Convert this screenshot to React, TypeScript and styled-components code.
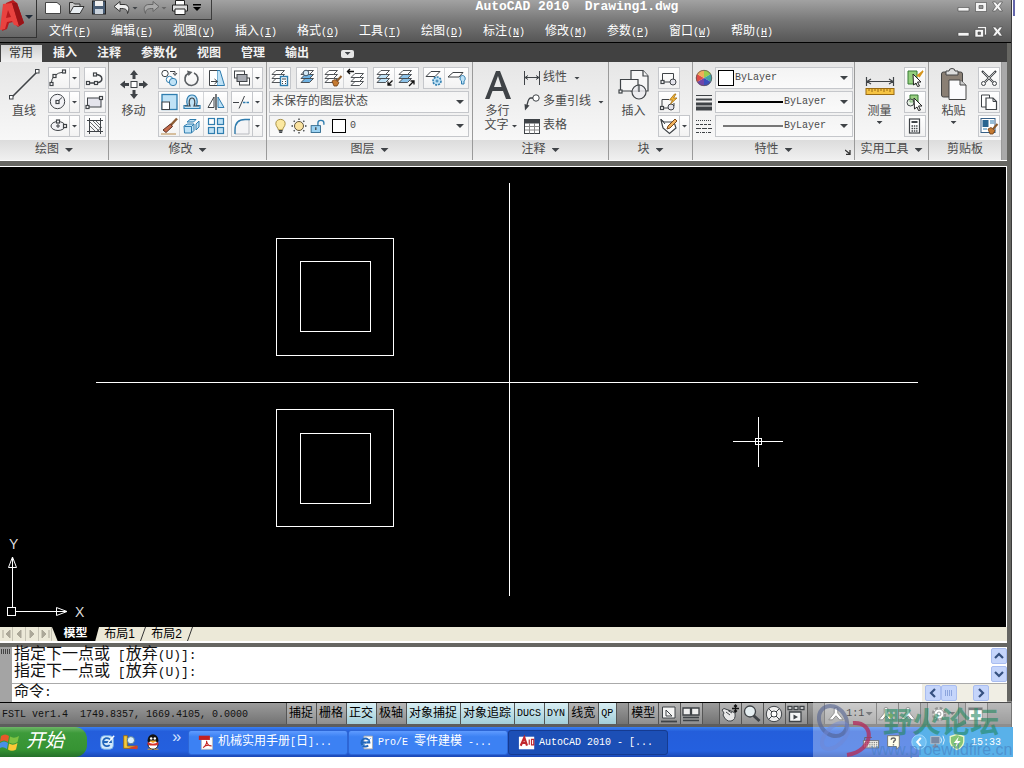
import React from "react";
import styled, { createGlobalStyle, css } from "styled-components";

const CJK = `"Liberation Mono", "Noto Sans CJK SC", monospace`;
const INK = "#3f4347";
const BLUE = "#2f7daf";
const PALE = "#bfe2f6";

const Global = createGlobalStyle`
  *, *::before, *::after { box-sizing: border-box; }
  body { margin: 0; background: #fff; font: 12px/16px ${CJK}; color: #111; }
  button, input, select, textarea { font: inherit; color: inherit; margin: 0; padding: 0; border: 0; background: none; border-radius: 0; outline: 0; }
  button { cursor: default; white-space: nowrap; }
  svg { display: block; flex: none; }
`;

/* ---------- text ---------- */
const Latin = styled.span<{ $size: number }>`
  font-size: ${(p) => p.$size}px;
  white-space: pre;
`;

function Mixed({ text, size = 10 }: { text: string; size?: number }) {
  return (
    <>
      {text.split(/([\x20-\x7e]+)/).map((part, i) =>
        i % 2 ? (
          <Latin key={i} $size={size}>{part}</Latin>
        ) : (
          part
        )
      )}
    </>
  );
}

/* ---------- icons ---------- */
const Node = ({ x, y }: { x: number; y: number }) => (
  <rect x={x - 1.5} y={y - 1.5} width="3" height="3" fill="#fff" stroke={INK} strokeWidth="1.2" />
);

const Stack = ({ tint = "#fff", dx = 0 }: { tint?: string; dx?: number }) => (
  <g transform={`translate(${dx} 0)`} stroke={INK} strokeWidth=".9" strokeLinejoin="round">
    <path d="M2 14.5 6 10.5H14.5L10.5 14.5Z" fill={tint} />
    <path d="M2 10.5 6 6.5H14.5L10.5 10.5Z" fill={tint} />
    <path d="M2 6.5 6 2.5H14.5L10.5 6.5Z" fill="#fff" />
  </g>
);

const Brush = () => (
  <g>
    <path d="M18.5 8 14 13" stroke="#8a5a2c" strokeWidth="2" />
    <path d="M9 13 12 11.5 16 14.500 14 18 11 18Z" fill="#c57a31" stroke="#6d3c12" strokeWidth=".8" />
  </g>
);

const art: Record<string, React.ReactNode> = {
  arc: <><path d="M2 16Q3 5 15 4" /><Node x={2.5} y={16} /><Node x={5.5} y={8} /><Node x={15} y={3.5} /></>,
  pline: <><path d="M3 15H11C19 15 19 6.5 10 6.5" strokeWidth="1.5" /><Node x={3} y={15} /><Node x={11} y={15} /><Node x={10} y={6.5} /></>,
  circle: <><circle cx="8.5" cy="9.5" r="7.2" fill="#f3f3f6" /><path d="M8.5 9.5 13 5.5" /><Node x={8.5} y={10} /></>,
  rect: <><rect x="2.5" y="6" width="13.5" height="9" fill="#e4e4ec" /><Node x={2.5} y={15} /><Node x={16} y={6} /></>,
  ellipse: <><ellipse cx="9" cy="10" rx="7" ry="4.5" fill="#f3f3f6" /><path d="M7 10h4M9 8v4" /><Node x={9} y={5.5} /><Node x={16} y={10} /></>,
  hatch: <><path d="M2 4.5H18M2 15.5H18M4.500 2V18M15.500 2V18" /><path d="M5 6 14 15M5 10 10 15M8 5 15 12M11 5 15 9M11 16l6-5" strokeWidth=".8" /></>,
  copy: <><circle cx="6" cy="5.500" r="3.200" fill="#fff" /><path d="M11 3.500h5v3M14 5l2 2.500 2-2.500" /><circle cx="10.500" cy="11.500" r="3.200" stroke={BLUE} fill="#fff" /><circle cx="14" cy="14" r="3.700" stroke={BLUE} fill={PALE} /></>,
  rotate: <><path d="M6.500 5.200A6.500 6.500 0 1 0 12 5" strokeWidth="1.700" stroke="#5b5f63" /><path d="M5 2.500 10.500 4 6.500 8Z" fill="#5b5f63" stroke="none" /></>,
  stretch: <><path d="M11 2.500h3L18.500 17.500H11Z" fill={PALE} stroke={BLUE} /><path d="M11 2.500H3.500v15H11" fill="#fff" /><path d="M5 13.500h6M8.500 11l3 2.500-3 2.500" /></>,
  scale: <><rect x="3" y="2.500" width="15" height="15" fill={PALE} stroke={BLUE} strokeWidth="1.300" /><rect x="3" y="10" width="7.500" height="7.500" fill="#fff" /></>,
  offset: <><path d="M2 16.500H18V13.500H14.500C16 10 15.500 3 10 3S4 10 5.500 13.500H2Z" fill={PALE} stroke={BLUE} strokeWidth="1.200" /><path d="M3 14H8C6.500 11 7 6 10 6s3.500 5 2 8h5" strokeWidth="1.200" /></>,
  mirror: <><path d="M8 5V15.500H2Z" fill="#fff" /><path d="M12 5V15.500H18Z" fill={PALE} stroke={BLUE} /><path d="M10 2V18" strokeWidth="1.400" /></>,
  erase: <><path d="M18 2.500 11 10" stroke="#8d5d36" strokeWidth="2.500" /><path d="M11.500 8 13.500 10.500 7 16.500 4 14Z" fill="#c46a4a" stroke="#5b3023" /><path d="M2 18H17" stroke="#b98948" /></>,
  explode: <><path d="M2 10 5.500 8H12V14.500L9.500 17H2.500Z" fill={PALE} stroke={BLUE} /><path d="M2.500 10.500H9.500V17M9.500 10.500 12 8M5 6 8 3.500h6L11.500 6ZM14 8l3-3v6l-3 3Z" stroke={BLUE} fill={PALE} /></>,
  array: <>{[2.5, 11.5].map((x) => [2.5, 11.5].map((y) => <rect key={`${x}-${y}`} x={x} y={y} width="6" height="6" fill={x === 2.5 && y === 2.5 ? "#fff" : PALE} stroke={BLUE} strokeWidth="1.200" />))}</>,
  order: <><rect x="2.500" y="3" width="10" height="7" fill="#fff" /><rect x="7.500" y="10" width="10" height="7" fill="#fff" /><rect x="5" y="6.500" width="10" height="7" fill="#a8abb2" /></>,
  trim: <><path d="M1 10.500H7M7 16.500 12.500 4" stroke={INK} /><path d="M11 10.500H18" stroke={BLUE} strokeWidth="1.500" strokeDasharray="2.500 1" /></>,
  fillet: <><path d="M3 18V14C3 7 7 3.500 13 3.500H17V18Z" fill="#f4f4f6" stroke="#b9bbc0" /><path d="M3 18V14C3 7 7 3.500 13 3.500H18" stroke={BLUE} strokeWidth="1.300" /></>,
  layerProps: <><Stack /><rect x="10.500" y="8.500" width="7" height="9" fill="#fff" stroke={BLUE} strokeWidth="1.400" /><path d="M12 11h4M12 13.500h1M15 13.500h1M12 15.500h1M15 15.500h1" /></>,
  layerCurrent: <><Stack tint="#6fb2e2" dx={2} /><circle cx="9" cy="5" r="2.800" fill="#d5e8f4" stroke="#456" /></>,
  layerMatch: <><Stack /><Brush /></>,
  layerPrev: <><g transform="translate(3 3)"><Stack /></g><path d="M1.500 3.500H8M4 1 1.500 3.500 4 6" strokeWidth="1.400" stroke="#111" /></>,
  layerIso: <><Stack tint={PALE} dx={1} /><path d="M18.500 12.500 14 17M14 13.500V17h3.500" stroke="#111" strokeWidth="1.300" /></>,
  layerUniso: <><Stack tint="#8cc2e8" dx={1} /><path d="M13 18 18 13M14.500 13H18v3.500" stroke="#111" strokeWidth="1.300" /></>,
  layerFreeze: <><path d="M2 8.500 7 3.500H16L11 8.500Z" fill="#fff" /><circle cx="13" cy="13" r="4" fill={PALE} stroke={BLUE} strokeDasharray="2 1" strokeWidth="1.600" /><circle cx="13" cy="13" r="1" stroke={BLUE} /></>,
  layerOff: <><path d="M1 9 6 4.500H16L12 9Z" fill="#fff" /><path d="M14.500 16v-3c-2-1-2-5.500 1-5.500s3.500 4.500 1.500 5.500v3Z" fill={PALE} stroke={BLUE} /></>,
  bulb: <><path d="M7.500 14C7 11 4.500 10 4.500 6.500 4.500 0 15.500 0 15.500 6.500 15.500 10 13 11 12.500 14Z" fill="#fbe8a0" stroke="#98802e" /><path d="M8 15h4.500M8.500 17h3.500" strokeWidth="1.500" /></>,
  sun: <><circle cx="10" cy="10" r="4.500" fill="#fbe3a0" stroke="#5e533b" /><path d="M10 2.500V4M10 16v1.500M2.500 10H4M16 10h1.500M4.700 4.700l1 1M14.300 14.300 15.300 15.300M15.300 4.700l-1 1M4.700 15.300l1-1" strokeWidth="1.400" /></>,
  unlock: <><path d="M10.500 9V5.500C10.500 2 17.500 2 17.500 5.500V8" stroke={BLUE} strokeWidth="1.600" /><rect x="2.500" y="9" width="11" height="8" fill="#9bd2f2" stroke="#245f86" /><path d="M8 11v3" strokeWidth="1.500" /></>,
  dimLinear: <><path d="M2.500 3V17M17.500 3V17M3 9.500H17M6 7.500 3 9.500 6 11.500M14 7.500 17 9.500 14 11.500" /></>,
  leader: <><circle cx="14" cy="6" r="3.200" fill="#fff" /><path d="M11 6H8.500Q6.500 6 5 13" strokeWidth="1.300" /><path d="M2.500 12 7.500 13.500 3 18.500Z" fill={INK} stroke="none" /></>,
  table: <><rect x="2.500" y="3.500" width="15" height="14" fill="#fff" /><path d="M2.500 5.500H17.500" strokeWidth="4" /><path d="M3 10.500H17.500M3 14H17.500M7.500 7V17.500M12.500 7V17.500" stroke="#888" /></>,
  blockCreate: <><path d="M3.500 14V5.500H14.500V12M3.500 14H11" /><circle cx="14" cy="14" r="3" fill="#e4e4ec" /><Node x={3.5} y={14} /></>,
  blockEdit: <><path d="M3 16V7.500H10M3 16H9M15 11v3" /><circle cx="12" cy="15" r="3" fill="#e4e4ec" /><path d="M15.500 2 10.500 8H13.500L11.500 12 18 6H14.500L17 2Z" fill="#f6b735" stroke="#a16d14" strokeWidth=".8" /><Node x={3} y={16} /></>,
  attrib: <><path d="M2 4 4 12 10.500 17.500 17 12 15 6H5Z" fill="#fff" strokeWidth="1.200" /><path d="M16 3 9 10 8 13 11 12 18 5Z" fill="#f0b25e" stroke="#7b4a1b" /><path d="M2 3 6 8" /></>,
  quickSelect: <><path d="M3 3H12V16H3Z" fill="#94cf7d" stroke="#377a35" /><path d="M12 8 18 3 14 9" fill="#f7b637" stroke="#d6951d" strokeWidth="1.600" /><path d="M8 6 16 14H12.500L14.500 18 12.500 18.500 11 15 8.500 17Z" fill="#fff" stroke="#222" /></>,
  selectAll: <><path d="M5 3H13V10H5Z" fill="#9ace82" stroke="#377a35" /><circle cx="5.500" cy="10.500" r="3.500" fill="#d6ebd0" fillOpacity=".5" /><path d="M9 6 17 14H13.500L15.500 18 13.500 18.500 12 15 9.500 17Z" fill="#fff" stroke="#222" /></>,
  calc: <><rect x="4.500" y="3" width="10" height="14" fill="#fff" strokeWidth="1.200" /><path d="M6.500 6H12.500" strokeWidth="2" /><path d="M6.500 10h6M6.500 12.500h6M6.500 15h6" strokeWidth="1.300" strokeDasharray="1.500 .8" /></>,
  cut: <><path d="M3 3 14 14M17 3 6 14" strokeWidth="2.200" /><path d="M4 4 14 14M16 4 6 14" stroke="#eee" strokeWidth=".7" /><circle cx="4.500" cy="15.500" r="2" /><circle cx="15.500" cy="15.500" r="2" /></>,
  copyClip: <><path d="M2.500 3H10.500V15H2.500Z" fill="#fff" /><path d="M7 6H14L17.500 9.500V17.500H7Z" fill="#fff" strokeWidth="1.200" /><path d="M14 6v3.500h3.500" /></>,
  matchProps: <><rect x="2" y="2.500" width="14" height="14" fill="#fff" stroke="#365f86" /><rect x="3.500" y="4" width="6" height="7" fill="#28648f" stroke="none" /><path d="M11 5h4M11 7h4M4 13h4" stroke={BLUE} /><Brush /></>,
  color: <g stroke="none"><path d="M10 10V2A8 8 0 0 1 17 6Z" fill="#9bcf4a" /><path d="M10 10 17 6A8 8 0 0 1 17 14Z" fill="#3fa3a4" /><path d="M10 10 17 14A8 8 0 0 1 10 18Z" fill="#394fbb" /><path d="M10 10V18A8 8 0 0 1 3 14Z" fill="#7045a9" /><path d="M10 10 3 14A8 8 0 0 1 3 6Z" fill="#df4b45" /><path d="M10 10 3 6A8 8 0 0 1 10 2Z" fill="#f0ae58" /><circle cx="10" cy="10" r="7.700" fill="none" stroke="#655" strokeWidth=".8" /></g>,
  weight: <><path d="M2 3.500H18" /><path d="M2 7.500H18" strokeWidth="2" /><path d="M2 12H18" strokeWidth="3" /><path d="M2 16.500H18" strokeWidth="4" /></>,
  linetype: <><path d="M2 4.500H18" strokeDasharray="1 1" /><path d="M2 8.500H18" strokeDasharray="3 1" /><path d="M2 12.500H18" strokeDasharray="5 1" /><path d="M2 16.500H18" strokeDasharray="3 1 1 1" /></>,
  newDoc: <path d="M2.500 4.500H14L17.500 7.500V15.500H2.500Z" fill="#fff" stroke="#444" />,
  open: <><path d="M3.500 15.500V4.500H7L8.500 6H14V8.500" fill="#ccc" stroke="#333" /><path d="M3.500 15.500 7.500 8.500H18L14 15.500Z" fill="#e9eef2" stroke="#333" /></>,
  save: <><rect x="3.500" y="3" width="13" height="13" fill="#4a5e76" stroke="#222" /><path d="M6 3h8v5H6Z" fill="#f1f1f1" stroke="none" /><path d="M6 11h8v5H6Z" fill="#c9d2dc" stroke="none" /></>,
  undo: <path d="M2 8.500 8 3.500V6.500H12C17 6.500 18 11 15.500 15.500 15.500 11 13 10.500 8 10.500V13.500Z" fill="#eee" stroke="#333" />,
  redo: <path d="M18 8.500 12 3.500V6.500H8C3 6.500 2 11 4.500 15.500 4.500 11 7 10.500 12 10.500V13.500Z" fill="#aaa" stroke="#666" />,
  print: <><path d="M5.500 7V2.500H14.500V7" fill="#fff" stroke="#222" /><path d="M2.500 7H17.500V13H2.500Z" fill="#ddd" stroke="#222" /><path d="M5 11H15V16.500H5Z" fill="#fff" stroke="#222" /></>,
  paperModel: <><path d="M3.500 3H16V14H3.500Z" fill="#f4f4f4" /><path d="M7 6V12H13Z" /><path d="M2 17.500H18" strokeWidth="1.800" /></>,
  layouts: <><path d="M2 4H9.500V11H2ZM10.500 4H18V11H10.500Z" fill="#eee" strokeWidth="1.300" /><path d="M2 13.500H18M2 16.500H18" strokeWidth="1.700" /></>,
  pan: <><path d="M2 6 4 9 3 11Q6 18 11 17 16 16 15 9L11 7 4 4.500Z" fill="#e8e8e8" /><path d="M6 8 10 11M8 6.500 12 9" /><path d="M12 4.500H19M15.500 1V8M14 2.500l1.500-1.500L17 2.500M14 6.500 15.500 8 17 6.500" stroke="#111" strokeWidth="1.300" /></>,
  zoom: <><path d="M11.500 11.500 17.500 17" strokeWidth="3" /><circle cx="8" cy="7.500" r="5.500" fill="#e5eef1" strokeWidth="1.300" /></>,
  wheel: <><circle cx="10" cy="10" r="7.700" fill="#eee" /><circle cx="10" cy="10" r="3" fill="#fff" /><path d="M4.500 4.500 8 8M15.500 4.500 12 8M4.500 15.500 8 12M15.500 15.500 12 12" /></>,
  motion: <><path d="M2 2.500h4v3H2ZM8 2.500h4v3H8ZM14 2.500h4v3h-4ZM3.500 8H15V17.500H3.500Z" fill="#f5f5f5" strokeWidth="1.300" /><path d="M7.500 10.500V15.500L12 13Z" fill={INK} stroke="none" /></>,
  annot: <><path d="M8 3.500Q10 2 12 3.500L12 9 18 16.500H14L10 12 6 16.500H2L8 9Z" fill="#fff" stroke="#555" /></>,
  annotLit: <><path d="M8 3.500Q10 2 12 3.500L12 9 18 16.500H14L10 12 6 16.500H2L8 9Z" fill="#fff" stroke="#555" /><circle cx="15" cy="12" r="2.500" fill="#e6d23c" stroke="none" /></>,
  gear: <><circle cx="10" cy="10" r="6.500" stroke="#666" fill="#fff" strokeWidth="3" strokeDasharray="3 2.100" /><circle cx="10" cy="10" r="5.500" stroke="#666" fill="#fff" /><circle cx="10" cy="10" r="2.200" stroke="#666" /></>,
  screen: <><rect x="3" y="3" width="15" height="14" fill="#fff" stroke="#666" /><path d="M3 4.500H18" strokeWidth="2.500" /></>,
  ie: <><path d="M7 2.500H17V17.500H7Z" fill="#fff" stroke="#aaa" /><path d="M12 13.500A4.700 4.700 0 1 1 13.500 10H5" stroke="#2166ba" strokeWidth="2.200" /><path d="M3 15Q8 13 15 5" stroke="#4d91d9" /></>,
  desktop: <><rect x="3" y="3" width="14" height="15" rx="4" fill="#d5eafb" stroke="#79b4e8" /><path d="M13 13.500A4.500 4.500 0 1 1 14.500 10H6" stroke="#2166ba" strokeWidth="2" /><path d="M11 11 18 3" stroke="#fff" strokeWidth="1.500" /></>,
  search: <><path d="M3 3V17H18V14.500H7V3Z" fill="#f3cb3d" stroke="#9b6b10" /><path d="M7 17 18 14v4Z" fill="#d43d2f" stroke="none" /><circle cx="11" cy="8" r="4" fill="#d8effb" stroke="#4f7890" /></>,
  penguin: <><ellipse cx="10" cy="8" rx="6" ry="6.500" fill="#111" stroke="none" /><ellipse cx="10" cy="13" rx="5.500" ry="5" fill="#fff" stroke="#111" /><path d="M4 10Q10 14 16 10V13Q10 15 4 13Z" fill="#d83228" stroke="none" /><circle cx="8" cy="6" r="1.400" fill="#fff" stroke="none" /><circle cx="12" cy="6" r="1.400" fill="#fff" stroke="none" /><path d="M7 9H13L10 10.500ZM4 18H9M11 18h5" fill="#f0a51e" stroke="#f0a51e" /></>,
  pdf: <><path d="M4 4H17V18H4Z" fill="#fff" stroke="#bbb" /><path d="M1 2H14V7H1Z" fill="#c3201f" stroke="none" /><path d="M6 16Q11 12 10 8 11 14 16 14 10 12 6 16Z" stroke="#c3201f" strokeWidth="1.200" /></>,
  acad: <><path d="M1 3H18V17H1Z" fill="#fff" stroke="none" /><path d="M3 13 7 4 10 13M4.500 10H9" stroke="#c1272d" strokeWidth="2.400" /><path d="M12.500 6v6M15 6h2.500v6H15Z" stroke="#c1272d" strokeWidth="1.300" /></>,
  keyboard: <><path d="M3 9V5H11" stroke="#222" /><rect x="1.500" y="8.500" width="17" height="8" fill="#f2f2e8" stroke="#333" /><path d="M3 10.500h14M3 12.500h14M3 14.500h14" stroke="#333" strokeDasharray="1.500 1" /></>,
  help: <><path d="M4 3H17V15L14 18V15H4Z" fill="#fffde0" stroke="#333" /><path d="M8 7.500Q8 5.500 10.500 5.500T12.500 8Q10.500 9 10.500 11M10.500 12.500v1.500" stroke="#222" strokeWidth="1.500" /></>,
  collapse: <><circle cx="10" cy="10" r="8" fill="#32a4ee" stroke="#79c9fb" /><path d="M12 5.500 8 10 12 14.500" stroke="#fff" strokeWidth="2.200" /></>,
  network: <><rect x="2" y="4" width="10" height="8" fill="#41577c" stroke="#9ab" /><path d="M4 15H10M7 12v3" stroke="#556" strokeWidth="2" /><path d="M13 5Q15 8 13 11M15.500 3Q18.500 8 15.500 13" stroke="#dceeff" /></>,
  shield: <><path d="M10 1.500 17.500 4V10Q16.500 16 10 18.500 3.500 16 2.500 10V4Z" fill="#50ac3a" stroke="#e5f5b0" strokeWidth="1.500" /><path d="M12 4 6.500 11H10L8 16 14 9H10.500Z" fill="#fff" stroke="none" /></>,
};

function Icon({ name, size = 20 }: { name: string; size?: number }) {
  return (
    <svg width={size} height={size} viewBox="0 0 20 20" fill="none" stroke={INK} aria-hidden>
      {art[name]}
    </svg>
  );
}

const Arrow = styled.span<{ $w?: number; $color?: string }>`
  display: inline-block;
  flex: none;
  width: ${(p) => (p.$w ?? 3) * 2}px;
  height: ${(p) => p.$w ?? 3}px;
  background: ${(p) => p.$color ?? INK};
  clip-path: polygon(0 0, 100% 0, 50% 100%);
  pointer-events: none;
`;

/* ---------- page and window ---------- */
const Page = styled.div`
  position: relative;
  min-height: 100vh;
  min-width: 1000px;
  padding: 0 11px 11px 0;
  display: flex;
  flex-direction: column;
  background: linear-gradient(#6466ab, #6466ab) right 9px top 0 / 2px 16px no-repeat, #fff;
`;
const Window = styled.main`
  flex: 1;
  display: flex;
  flex-direction: column;
  margin-right: 1px;
  background: #666662;
  border-right: 1px solid #3c3c3c;
`;
const Header = styled.header`
  display: grid;
  grid-template-columns: 37px 1fr 54px;
  height: 43px;
  background: linear-gradient(#a2a2a2, #777 50%, #565656);
  border-bottom: 1px solid #000;
`;
const AppButton = styled.button`
  display: flex;
  align-items: flex-start;
  width: 37px;
  height: 38px;
  background: linear-gradient(#a5a5a5, #666);
  border: solid #333;
  border-width: 0 1px 1px 0;
`;
const AppArrow = styled(Arrow)`
  margin-top: 15px;
`;
const HeaderMain = styled.div`
  min-width: 0;
`;
const TitleRow = styled.div`
  display: flex;
  height: 20px;
`;
const QuickAccess = styled.div`
  display: flex;
  align-items: center;
  gap: 3px;
  width: 175px;
  height: 20px;
  padding: 0 3px 3px 6px;
  border: solid #3c3c3c;
  border-width: 0 1px 1px 0;
`;
const ToolButton = styled.button`
  display: flex;
  align-items: center;
`;
const Title = styled.h1`
  flex: 1;
  margin: 0;
  padding-right: 15px;
  text-align: center;
  font: bold 13px/13px ${CJK};
  color: #fff;
  white-space: pre;
`;
const MenuBar = styled.nav`
  display: flex;
  padding: 4px 0 0 2px;
`;
const MenuItem = styled.button`
  width: 62px;
  padding: 0 10px;
  line-height: 17px;
  color: #fff;
`;
const WindowButtons = styled.div`
  display: grid;
  grid-template-columns: repeat(3, 17px);
  grid-template-rows: 13px 12px;
  row-gap: 12px;
  align-items: center;
`;

const Work = styled.div`
  flex: 1;
  display: flex;
  flex-direction: column;
  padding-right: 4px;
`;
const Tabs = styled.nav`
  display: flex;
  align-items: stretch;
  height: 19px;
  padding: 2px 0 0 1px;
  background: #414141;
`;
const Tab = styled.button<{ $on?: boolean }>`
  padding: 0 10px;
  line-height: 16px;
  color: #f2f2f2;
  font-weight: bold;
  ${(p) => p.$on && css`
    padding: 0 9px 0 8px;
    margin-right: 1px;
    color: #333;
    font-weight: normal;
    background: linear-gradient(#cfcfcf, #f1f1f1);
  `}
`;
const TabMenu = styled.button`
  align-self: center;
  display: flex;
  align-items: center;
  justify-content: center;
  width: 13px;
  height: 8px;
  margin: 0 0 0 22px;
  background: #e6e6e6;
  border-radius: 2px;
`;

/* ---------- ribbon ---------- */
const Ribbon = styled.section`
  display: grid;
  grid-template-columns: 109fr 158fr 206fr 136fr 84fr 162fr 74fr 73fr 5px;
  background: #a9a9a9;
  border-bottom: 1px solid #fff;
`;
const PanelBox = styled.section`
  display: flex;
  flex-direction: column;
  min-width: 0;
  background: linear-gradient(#e6e6e6, #fcfcfc);
  border-right: 1px solid #9a9a9a;
`;
const PanelBody = styled.div<{ $left?: number }>`
  display: flex;
  height: 78px;
  padding: 5px 0 0 ${(p) => p.$left ?? 0}px;
`;
const PanelTitle = styled.button`
  position: relative;
  display: flex;
  align-items: center;
  justify-content: center;
  gap: 6px;
  height: 20px;
  color: #4a4a4a;
  background: linear-gradient(#dcdcdc, #f0f0f0);
`;
const Launcher = styled.span`
  position: absolute;
  right: 3px;
  bottom: 5px;
`;
function Panel({ title, left, arrow = true, launcher, children }: { title: string; left?: number; arrow?: boolean; launcher?: boolean; children: React.ReactNode }) {
  return (
    <PanelBox>
      <PanelBody $left={left}>{children}</PanelBody>
      <PanelTitle>
        {title}
        {arrow && <Arrow $w={4} />}
        {launcher && (
          <Launcher>
            <svg width="6" height="6" viewBox="0 0 6 6" stroke="#333" fill="none"><path d="M0 1 5 5M5 1V5.500H1" strokeWidth="1.300" /></svg>
          </Launcher>
        )}
      </PanelTitle>
    </PanelBox>
  );
}
const BigButton = styled.button<{ $w: number }>`
  display: flex;
  flex-direction: column;
  align-items: center;
  flex: none;
  width: ${(p) => p.$w}px;
  line-height: 14px;
  color: #4a4a4a;
`;
const BigLabel = styled.span`
  margin: 2px 0;
`;
const LabelWithArrow = styled.span`
  display: flex;
  align-items: center;
  gap: 3px;
  padding-left: 7px;
`;
const Rows = styled.div<{ $ml?: number }>`
  display: flex;
  flex-direction: column;
  gap: 2px;
  margin-left: ${(p) => p.$ml ?? 0}px;
`;
const Group = styled.div`
  display: flex;
  border: 1px solid #c5c7cb;
  background: linear-gradient(#fff, #f2f2f2);
`;
const IconButton = styled.button`
  display: flex;
  align-items: center;
  justify-content: center;
  width: 20px;
  height: 20px;
  & + & {
    width: 24px;
    border-left: 1px solid #d3d5d8;
  }
`;
const DropButton = styled.button`
  display: flex;
  align-items: center;
  justify-content: center;
  width: 10px;
  border-left: 1px solid #c5c7cb;
`;
function Tools({ names, drop }: { names: string[]; drop?: boolean }) {
  return (
    <Group>
      {names.map((n) => (
        <IconButton key={n} aria-label={n}><Icon name={n} /></IconButton>
      ))}
      {drop && <DropButton aria-label={`${names[0]} menu`}><Arrow /></DropButton>}
    </Group>
  );
}
const LayerTools = styled.div`
  display: flex;
  justify-content: space-between;
  width: 200px;
`;
const Field = styled.div<{ $w: number }>`
  display: flex;
  align-items: center;
  width: ${(p) => p.$w}px;
  height: 22px;
  padding: 0 4px 0 2px;
  color: #4a4a4a;
  border: 1px solid #c5c7cb;
  background: linear-gradient(#f4f4f4, #fafafa);
`;
const Select = styled.select<{ $latin?: boolean }>`
  appearance: none;
  flex: 1;
  min-width: 0;
  height: 18px;
  line-height: 18px;
  font-size: ${(p) => (p.$latin ? 10 : 12)}px;
`;
const LayerName = styled(Select)`
  padding-left: 3px;
`;
const Swatch = styled.span<{ $size: number; $ml?: number }>`
  flex: none;
  width: ${(p) => p.$size}px;
  height: ${(p) => p.$size}px;
  margin: 0 1px 0 ${(p) => p.$ml ?? 0}px;
  border: 1px solid #000;
  background: #fff;
`;
const LineSample = styled.span<{ $thin?: boolean }>`
  flex: none;
  width: ${(p) => (p.$thin ? 60 : 65)}px;
  height: 2px;
  margin: 0 1px 0 ${(p) => (p.$thin ? 5 : 0)}px;
  background: ${(p) => (p.$thin ? "#777" : "#000")};
`;
const PropRow = styled.div`
  display: flex;
  align-items: center;
  gap: 1px;
`;
const NoteButton = styled.button`
  display: flex;
  align-items: center;
  gap: 1px;
  height: 22px;
  color: #4a4a4a;
`;
const NoteArrow = styled(Arrow)`
  margin-left: 6px;
`;
const BlockRows = styled(Rows)`
  align-items: flex-start;
`;

/* ---------- drawing area ---------- */
const Viewport = styled.div`
  flex: 1;
  display: flex;
  min-height: 460px;
  margin-top: 5px;
  border: solid #fff;
  border-width: 1px 1px 0 0;
  background: #000;
`;
const Drawing = styled.svg`
  flex: 1;
  min-width: 0;
  font: 14px/14px "Liberation Sans", sans-serif;
`;
const LayoutBar = styled.div`
  display: flex;
  height: 16px;
  background: #ece9d8;
  border-bottom: 2px solid #fff;
`;
const NavButton = styled.button`
  display: flex;
  align-items: center;
  justify-content: center;
  width: 13px;
  height: 14px;
  border-right: 1px solid #c6c3b4;
`;
const LayoutTab = styled.button<{ $on?: boolean }>`
  width: 41px;
  height: 14px;
  line-height: 14px;
  color: #000;
  ${(p) => p.$on && css`
    width: 47px;
    color: #fff;
    font-weight: bold;
    background: #000;
    clip-path: polygon(0 0, 100% 0, 92% 100%, 12% 100%);
  `}
`;
const Digit = styled.span`
  font-family: "Liberation Sans", sans-serif;
`;

/* ---------- command window ---------- */
const Command = styled.section`
  display: grid;
  grid-template-columns: 12px 1fr;
  height: 55px;
  margin-top: 4px;
  background: #fff;
`;
const Grip = styled.div`
  padding: 2px 1px;
  background: #a4a4a4;
`;
const GripDots = styled.div`
  height: 5px;
  background: repeating-linear-gradient(90deg, #444 0 1px, transparent 1px 2px);
`;
const CommandMain = styled.div`
  display: flex;
  flex-direction: column;
  min-width: 0;
  font-size: 16px;
`;
const HistoryRow = styled.div`
  display: flex;
  justify-content: space-between;
  height: 37px;
  border-bottom: 1px solid #aaa;
`;
const History = styled.div`
  padding-left: 2px;
  line-height: 16px;
  color: #111;
`;
const VScroll = styled.div`
  display: flex;
  flex-direction: column;
  justify-content: space-between;
  padding: 1px 0;
`;
const ScrollButton = styled.button`
  display: flex;
  align-items: center;
  justify-content: center;
  width: 16px;
  height: 16px;
  border: 1px solid #a9bdf0;
  border-radius: 2px;
  background: #c5d5fb;
`;
const InputRow = styled.div`
  display: flex;
  align-items: center;
  height: 18px;
`;
const Prompt = styled.label`
  display: flex;
  align-items: center;
  flex: 1;
  padding-left: 2px;
  font-size: 15px;
  line-height: 18px;
`;
const PromptInput = styled.input`
  flex: 1;
  margin-left: 6px;
`;
const HScroll = styled.div`
  display: flex;
  align-items: center;
  width: 85px;
  height: 18px;
  padding: 0 18px 0 3px;
  background: #f0eee4;
`;
const ScrollGap = styled.span`
  flex: 1;
`;

/* ---------- status bar ---------- */
const Status = styled.footer`
  display: flex;
  height: 25px;
  border-top: 1px solid #000;
  border-bottom: 3px solid #5d5d5d;
  background: linear-gradient(#9b9b9b, #737373);
`;
const Readout = styled.div`
  display: flex;
  align-items: center;
  gap: 12px;
  width: 286px;
  padding: 2px 0 0 2px;
`;
const StatusGroup = styled.div<{ $ml?: number }>`
  display: flex;
  margin-left: ${(p) => p.$ml ?? 0}px;
  border-right: 1px solid #555;
`;
const StatusButton = styled.button<{ $on?: boolean }>`
  display: flex;
  align-items: center;
  gap: 1px;
  padding: 0 3px 0 2px;
  color: #000;
  border-left: 1px solid #555;
  background: ${(p) => (p.$on ? "linear-gradient(#d8eef3, #a3ced9)" : "linear-gradient(#b7b7b7, #8f8f8f)")};
`;
const StatusIcon = styled(StatusButton)`
  width: 22px;
  padding: 0;
`;

/* ---------- taskbar ---------- */
const Taskbar = styled.footer`
  display: flex;
  height: 30px;
  background: linear-gradient(#3a7ff0, #245edb 15%, #2460df 80%, #1a48b5);
`;
const Start = styled.button`
  display: flex;
  align-items: center;
  gap: 6px;
  width: 87px;
  border-radius: 0 12px 12px 0;
  color: #fff;
  font: italic 19px/28px ${CJK};
  background: linear-gradient(#6cb566, #3d9a3a 20%, #369333 75%, #24702a);
`;
const Launch = styled.div`
  display: flex;
  align-items: center;
  gap: 5px;
  width: 101px;
  padding-left: 11px;
  color: #cfe0ff;
`;
const More = styled.span`
  margin: 0 0 8px 5px;
  font-size: 16px;
`;
const Task = styled.button<{ $on?: boolean }>`
  display: flex;
  align-items: center;
  gap: 3px;
  width: 160px;
  margin: 3px 0 2px;
  padding-left: 9px;
  color: #fff;
  border: 1px solid ${(p) => (p.$on ? "#153b91" : "#2d66d6")};
  border-radius: 3px;
  background: ${(p) => (p.$on ? "#1c4fb6" : "linear-gradient(#5f9bff, #3c81f3 25%)")};
`;
const Tray = styled.div`
  display: flex;
  align-items: center;
  gap: 4px;
  margin-left: auto;
  color: #fff;
`;
const TrayLight = styled.div`
  display: flex;
  align-items: center;
  align-self: stretch;
  gap: 1px;
  margin-left: 4px;
  padding-right: 12px;
  background: linear-gradient(90deg, transparent 9px, #1290e0 9px);
`;
const Clock = styled.time`
  margin-left: 4px;
`;

const Watermark = styled.div`
  position: absolute;
  right: 11px;
  bottom: 11px;
  width: 200px;
  height: 56px;
  background: rgba(255, 255, 255, 0.3);
  pointer-events: none;
`;
const WatermarkText = styled.div`
  position: absolute;
  left: 70px;
  top: 3px;
  font: bold 29px/32px "Noto Sans CJK SC", sans-serif;
  color: rgba(35, 135, 95, 0.6);
  white-space: nowrap;
`;
const WatermarkUrl = styled.div`
  position: absolute;
  left: 58px;
  bottom: 0;
  font: 16px/14px "Liberation Sans", sans-serif;
  color: rgba(70, 125, 190, 0.6);
  white-space: nowrap;
`;

const menus = ["文件F", "编辑E", "视图V", "插入I", "格式O", "工具T", "绘图D", "标注N", "修改M", "参数P", "窗口W", "帮助H"];
const toggles: [string, boolean][] = [["捕捉", false], ["栅格", false], ["正交", true], ["极轴", false], ["对象捕捉", true], ["对象追踪", true], ["DUCS", true], ["DYN", true], ["线宽", false], ["QP", true]];
const squares = [[276, 71, 117], [300, 94, 70], [276, 242, 117], [300, 266, 70]];

function WinIcon({ kind }: { kind: "min" | "max" | "restore" | "close" }) {
  const d = {
    min: "M1 7.500H12V11H1Z",
    max: "M1.500 2.500H12.500V11.500H1.500ZM5 5.500V8.500H9V5.500Z",
    restore: "M1 4.500H9.500V12H1ZM4 7V9.500H6.500V7ZM3.500 1.500H12.500V10H10.500V3.500H3.500Z",
    close: "M1.500 2H4.500L6.500 4.500 8.500 2H11.500L8.500 6.500 11.500 11H8.500L6.500 8.500 4.500 11H1.500L4.500 6.500Z",
  }[kind];
  return (
    <svg width="14" height="13" viewBox="0 0 14 13">
      <path d={d} fill="#f4f4f4" stroke="#444" strokeWidth=".6" fillRule="evenodd" />
    </svg>
  );
}

function Chevron({ d }: { d: string }) {
  return <svg width="10" height="10" viewBox="0 0 10 10" fill="none" stroke="#35507f" strokeWidth="2.200"><path d={d} /></svg>;
}

function TopBar() {
  return (
    <Header>
      <AppButton aria-label="AutoCAD">
        <svg width="25" height="34" viewBox="0 0 25 34">
          <path d="M6 3 13 0 17 3 24 23 18 27 13 22 9 23 7 29 2 31Z" fill="#b81a1e" />
          <path fillRule="evenodd" d="M3 4 12 3 19 26 14 25 12 21 7 22 5 29 0 30ZM8 10 6 18 11 17Z" fill="#e8423f" />
          <path d="M12 3 17 3 24 23 19 26Z" fill="#981317" />
        </svg>
        <AppArrow $w={4} $color="#1f2a38" />
      </AppButton>
      <HeaderMain>
        <TitleRow>
          <QuickAccess>
            <ToolButton aria-label="new"><Icon name="newDoc" /></ToolButton>
            <ToolButton aria-label="open"><Icon name="open" /></ToolButton>
            <ToolButton aria-label="save"><Icon name="save" /></ToolButton>
            <ToolButton aria-label="undo"><Icon name="undo" /><Arrow /></ToolButton>
            <ToolButton aria-label="redo"><Icon name="redo" /><Arrow $color="#666" /></ToolButton>
            <ToolButton aria-label="print"><Icon name="print" /></ToolButton>
            <ToolButton aria-label="more"><svg width="8" height="8" viewBox="0 0 8 8"><path d="M0 0H8V1.500H0ZM0 3H8L4 7Z" /></svg></ToolButton>
          </QuickAccess>
          <Title>{"AutoCAD 2010  Drawing1.dwg"}</Title>
        </TitleRow>
        <MenuBar>
          {menus.map((m) => (
            <MenuItem key={m}>
              {m.slice(0, 2)}
              <Latin $size={10}>(<u>{m[2]}</u>)</Latin>
            </MenuItem>
          ))}
        </MenuBar>
      </HeaderMain>
      <WindowButtons>
        {(["min", "max", "close", "min", "restore", "close"] as const).map((k, i) => (
          <button key={i} aria-label={k}><WinIcon kind={k} /></button>
        ))}
      </WindowButtons>
    </Header>
  );
}

function RibbonPanels() {
  return (
    <Ribbon>
      <Panel title="绘图">
        <BigButton $w={48}>
          <svg width="34" height="36" viewBox="0 0 34 36" fill="#fff" stroke={INK}>
            <path d="M5 30 30 5" strokeWidth="1.600" />
            <rect x="2.500" y="28.500" width="3.500" height="3.500" /><rect x="28.500" y="2.500" width="3.500" height="3.500" />
          </svg>
          <BigLabel>直线</BigLabel>
        </BigButton>
        <Rows>
          <Tools names={["arc"]} drop /><Tools names={["circle"]} drop /><Tools names={["ellipse"]} drop />
        </Rows>
        <Rows $ml={4}>
          <Tools names={["pline"]} /><Tools names={["rect"]} /><Tools names={["hatch"]} />
        </Rows>
      </Panel>
      <Panel title="修改">
        <BigButton $w={49}>
          <svg width="30" height="36" viewBox="0 0 30 36" fill={INK}>
            <rect x="12" y="14.500" width="6" height="6" fill="#fff" stroke={INK} />
            <path d="M15 3 19 8H16.500V12H13.500V8H11ZM15 32 19 27H16.500V23H13.500V27H11ZM1 17.500 6 13.500V16H10V19H6V21.500ZM29 17.500 24 13.500V16H20V19H24V21.500Z" />
          </svg>
          <BigLabel>移动</BigLabel>
        </BigButton>
        <Rows>
          <Tools names={["copy", "rotate", "stretch"]} />
          <Tools names={["scale", "offset", "mirror"]} />
          <Tools names={["erase", "explode", "array"]} />
        </Rows>
        <Rows $ml={3}>
          <Tools names={["order"]} drop /><Tools names={["trim"]} drop /><Tools names={["fillet"]} drop />
        </Rows>
      </Panel>
      <Panel title="图层" left={2}>
        <Rows>
          <LayerTools>
            <Tools names={["layerProps"]} />
            <Tools names={["layerCurrent"]} />
            <Tools names={["layerMatch", "layerPrev"]} />
            <Tools names={["layerIso", "layerUniso"]} />
            <Tools names={["layerFreeze", "layerOff"]} />
          </LayerTools>
          <Field $w={200}>
            <Select aria-label="图层状态"><option>未保存的图层状态</option></Select>
            <Arrow $w={4} />
          </Field>
          <Field $w={200}>
            <Icon name="bulb" size={17} />
            <Icon name="sun" />
            <Icon name="unlock" size={17} />
            <Swatch $size={14} $ml={6} />
            <LayerName aria-label="图层" $latin><option>0</option></LayerName>
            <Arrow $w={4} />
          </Field>
        </Rows>
      </Panel>
      <Panel title="注释">
        <BigButton $w={49}>
          <svg width="28" height="36" viewBox="0 0 28 36" fill={INK}>
            <path fillRule="evenodd" d="M12 4H16L27 32H22L19 24H8.500L5.500 32H1ZM14 9 10 20H17.500Z" />
          </svg>
          <BigLabelTight>多行</BigLabelTight>
          <LabelWithArrow>文字<Arrow /></LabelWithArrow>
        </BigButton>
        <Rows>
          <NoteButton><Icon name="dimLinear" />线性<NoteArrow /></NoteButton>
          <NoteButton><Icon name="leader" />多重引线<NoteArrow /></NoteButton>
          <NoteButton><Icon name="table" />表格</NoteButton>
        </Rows>
      </Panel>
      <Panel title="块">
        <BigButton $w={49}>
          <svg width="32" height="36" viewBox="0 0 32 36" fill="#f6f6f6" stroke={INK} strokeWidth="1.200">
            <path d="M13 3.500H25L30 9V24H13Z" /><path d="M25 3.500V9H30" />
            <path d="M2.500 24V12.500H20V24Z" /><circle cx="21" cy="25" r="7" fill="#ececf0" fillOpacity=".8" />
            <path d="M21 25V17.500" /><rect x="1" y="23" width="3" height="3" />
          </svg>
          <BigLabel>插入</BigLabel>
        </BigButton>
        <BlockRows>
          <Tools names={["blockCreate"]} /><Tools names={["blockEdit"]} /><Tools names={["attrib"]} drop />
        </BlockRows>
      </Panel>
      <Panel title="特性" left={1} launcher>
        <Rows>
          <PropRow>
            <Icon name="color" />
            <Field $w={138}>
              <Swatch $size={16} />
              <Select $latin aria-label="颜色"><option>ByLayer</option></Select><Arrow $w={4} />
            </Field>
          </PropRow>
          <PropRow>
            <Icon name="weight" />
            <Field $w={138}>
              <LineSample />
              <Select $latin aria-label="线宽"><option>ByLayer</option></Select><Arrow $w={4} />
            </Field>
          </PropRow>
          <PropRow>
            <Icon name="linetype" />
            <Field $w={138}>
              <LineSample $thin />
              <Select $latin aria-label="线型"><option>ByLayer</option></Select><Arrow $w={4} />
            </Field>
          </PropRow>
        </Rows>
      </Panel>
      <Panel title="实用工具">
        <BigButton $w={49}>
          <svg width="32" height="36" viewBox="0 0 32 36" fill="none" stroke={INK}>
            <path d="M2.500 10V19M29.500 10V19M3 14.500H29M7 12 3 14.500 7 17M25 12 29 14.500 25 17" strokeWidth="1.200" />
            <rect x="2" y="21.500" width="28" height="6" fill="#f6c443" stroke="#9a6a12" />
            <path d="M5 22v2M8 22v3M11 22v2M14 22v3M17 22v2M20 22v3M23 22v2M26 22v3" stroke="#9a6a12" />
          </svg>
          <BigLabel>测量</BigLabel><Arrow />
        </BigButton>
        <Rows>
          <Tools names={["quickSelect"]} /><Tools names={["selectAll"]} /><Tools names={["calc"]} />
        </Rows>
      </Panel>
      <Panel title="剪贴板" arrow={false}>
        <BigButton $w={49}>
          <svg width="28" height="36" viewBox="0 0 28 36" stroke="#444">
            <rect x="1.500" y="5" width="21" height="25" rx="2" fill="#8a7f74" />
            <path d="M6 8V4H9Q9 1.500 12 1.500T15 4H18V8Z" fill="#ddd" />
            <path d="M9 13H20L26 18V32.500H9Z" fill="#fbfbfd" /><path d="M20 13V18H26" fill="#ccc" />
          </svg>
          <BigLabel>粘贴</BigLabel><Arrow />
        </BigButton>
        <Rows>
          <Tools names={["cut"]} /><Tools names={["copyClip"]} /><Tools names={["matchProps"]} />
        </Rows>
      </Panel>
    </Ribbon>
  );
}

const BigLabelTight = styled(BigLabel)`
  margin-bottom: 0;
`;

export default function App() {
  return (
    <>
      <Global />
      <Page>
        <Window>
          <TopBar />
          <Work>
            <Tabs>
              <Tab $on>常用</Tab>
              {["插入", "注释", "参数化", "视图", "管理", "输出"].map((t) => <Tab key={t}>{t}</Tab>)}
              <TabMenu aria-label="ribbon"><Arrow /></TabMenu>
            </Tabs>
            <RibbonPanels />
            <Viewport>
              <Drawing fill="none" stroke="#fff" shapeRendering="crispEdges">
                <path d="M96 215.500H918M509.500 16V429" />
                {squares.map(([x, y, s]) => <rect key={`${x}-${y}`} x={x + 0.5} y={y + 0.5} width={s} height={s} />)}
                <path d="M733 274.500H783M758.500 250V300M755.500 271.500h6v6h-6Z" />
                <path d="M7.500 440.500h8v8h-8ZM12.500 440V401M16 444.500H56" />
                <g shapeRendering="auto">
                  <path d="M8.500 400.500H16.500L12.500 390ZM56.500 440.500V448.500L67 444.500ZM12.500 390V400M57 444.500H66" />
                  <path d="M10 372 14 378 18.500 372M14 378V383M75.500 440 83.500 449M83.500 440 75.500 449" stroke="none" />
                </g>
                <g stroke="none" fill="#ddd">
                  <text x="9" y="382">Y</text>
                  <text x="75" y="450">X</text>
                </g>
              </Drawing>
            </Viewport>
            <LayoutBar>
              {["M3 2V10M10 2 6 6 10 10Z", "M8 2 4 6 8 10Z", "M4 2 8 6 4 10Z", "M3 2 7 6 3 10ZM10 2V10"].map((d) => (
                <NavButton key={d} aria-label="layout">
                  <svg width="12" height="12" viewBox="0 0 12 12" fill="#aca899" stroke="#aca899"><path d={d} /></svg>
                </NavButton>
              ))}
              <LayoutTab $on>模型</LayoutTab>
              {["布局1", "布局2"].map((t) => (
                <React.Fragment key={t}>
                  <LayoutTab>{t.slice(0, 2)}<Digit>{t[2]}</Digit></LayoutTab>
                  <svg width="6" height="14" viewBox="0 0 6 14" stroke="#333"><path d="M5.500 0 .5 14" /></svg>
                </React.Fragment>
              ))}
            </LayoutBar>
            <Command>
              <Grip><GripDots /></Grip>
              <CommandMain>
                <HistoryRow>
                  <History>
                    <div><Mixed size={13} text="指定下一点或 [放弃(U)]:" /></div>
                    <div><Mixed size={13} text="指定下一点或 [放弃(U)]:" /></div>
                  </History>
                  <VScroll>
                    <ScrollButton aria-label="up"><Chevron d="M1 7 5 3 9 7" /></ScrollButton>
                    <ScrollButton aria-label="down"><Chevron d="M1 3 5 7 9 3" /></ScrollButton>
                  </VScroll>
                </HistoryRow>
                <InputRow>
                  <Prompt><Mixed size={13} text="命令:" /><PromptInput /></Prompt>
                  <HScroll>
                    <ScrollButton aria-label="left"><Chevron d="M7 1 3 5 7 9" /></ScrollButton>
                    <ScrollButton aria-label="thumb">
                      <svg width="8" height="8" viewBox="0 0 8 8" stroke="#8da5dd"><path d="M.5 1V7M2.500 1V7M4.500 1V7M6.500 1V7" /></svg>
                    </ScrollButton>
                    <ScrollGap />
                    <ScrollButton aria-label="right"><Chevron d="M3 1 7 5 3 9" /></ScrollButton>
                  </HScroll>
                </InputRow>
              </CommandMain>
            </Command>
          </Work>
          <Status>
            <Readout>
              <Latin $size={10}>FSTL ver1.4</Latin>
              <Latin $size={10}>1749.8357, 1669.4105, 0.0000</Latin>
            </Readout>
            <StatusGroup>
              {toggles.map(([t, on]) => <StatusButton key={t} $on={on}><Mixed text={t} /></StatusButton>)}
            </StatusGroup>
            <StatusGroup $ml={11}>
              <StatusButton>模型</StatusButton>
              <StatusIcon aria-label="paper"><Icon name="paperModel" /></StatusIcon>
              <StatusIcon aria-label="layouts"><Icon name="layouts" /></StatusIcon>
            </StatusGroup>
            <StatusGroup $ml={16}>
              {["pan", "zoom", "wheel", "motion"].map((n) => <StatusIcon key={n} aria-label={n}><Icon name={n} /></StatusIcon>)}
            </StatusGroup>
            <StatusGroup $ml={16}>
              <StatusButton><Icon name="annot" size={18} /><Latin $size={10}>1:1</Latin><Arrow $w={4} /></StatusButton>
              <StatusIcon aria-label="visibility"><Icon name="annotLit" size={18} /></StatusIcon>
              <StatusIcon aria-label="autoscale"><Icon name="annot" size={18} /></StatusIcon>
            </StatusGroup>
            <StatusGroup $ml={6}>
              <StatusButton aria-label="workspace"><Icon name="gear" size={18} /><Arrow /></StatusButton>
            </StatusGroup>
            <StatusGroup $ml={6}>
              <StatusIcon aria-label="screen"><Icon name="screen" size={18} /></StatusIcon>
            </StatusGroup>
          </Status>
        </Window>
        <Taskbar>
          <Start>
            <svg width="20" height="20" viewBox="0 0 20 20">
              <path d="M1 4Q5 1 9 4L8 10Q4 7 0 10Z" fill="#e8592a" />
              <path d="M10 4.500Q14 7 19 4L17.500 10Q13 13 9 10.500Z" fill="#7dc242" />
              <path d="M0 11Q4 8 8 11L7 17Q3 14 0 16Z" fill="#4a8fe8" />
              <path d="M9 11.500Q13 14 17.500 11L16 17.500Q12 20 8 17.500Z" fill="#fbc836" />
            </svg>
            开始
          </Start>
          <Launch>
            {["desktop", "search", "penguin"].map((n) => <ToolButton key={n} aria-label={n}><Icon name={n} size={18} /></ToolButton>)}
            <More>»</More>
          </Launch>
          <Task><Icon name="pdf" size={17} /><span><Mixed text="机械实用手册[日]..." /></span></Task>
          <Task><Icon name="ie" size={17} /><span><Mixed text="Pro/E 零件建模 -..." /></span></Task>
          <Task $on><Icon name="acad" size={18} /><Latin $size={10}>AutoCAD 2010 - [...</Latin></Task>
          <Tray>
            <Icon name="keyboard" size={18} />
            <Icon name="help" size={18} />
            <TrayLight>
              <Icon name="collapse" size={18} />
              <Icon name="network" size={18} />
              <Icon name="shield" size={18} />
              <Clock><Latin $size={10}>15:33</Latin></Clock>
            </TrayLight>
          </Tray>
        </Taskbar>
        <Watermark>
          <svg width="60" height="56" viewBox="0 0 60 56" fill="none" strokeWidth="4">
            <ellipse cx="20" cy="20" rx="13" ry="16" transform="rotate(-35 20 20)" stroke="#52618f" strokeOpacity=".6" />
            <ellipse cx="22" cy="35" rx="9" ry="16" transform="rotate(45 22 35)" stroke="#7088d4" strokeOpacity=".5" />
            <path d="M40 22C62 20 62 50 34 54" stroke="#b2305e" strokeOpacity=".8" />
          </svg>
          <WatermarkText>野火论坛</WatermarkText>
          <WatermarkUrl>www.proewildfire.cn</WatermarkUrl>
        </Watermark>
      </Page>
    </>
  );
}
